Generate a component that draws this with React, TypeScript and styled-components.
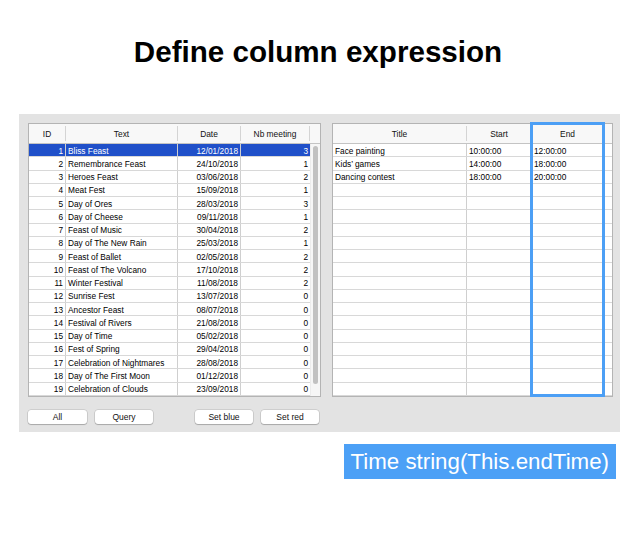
import React from "react";
import styled, { createGlobalStyle } from "styled-components";

const Global = createGlobalStyle`
  html, body { margin: 0; padding: 0; background: #ffffff; }
  body { font-family: "Liberation Sans", Arial, sans-serif; }
`;

const Page = styled.div`
  width: 640px;
  height: 560px;
  display: flex;
  flex-direction: column;
  box-sizing: border-box;
  padding-top: 35px;
  background: #fff;
`;

const Title = styled.h1`
  margin: 0 0 0 -4px;
  font-family: "Liberation Sans", Arial, sans-serif;
  font-weight: 700;
  font-size: 29.6px;
  line-height: 33px;
  text-align: center;
  color: #000;
`;

const Panel = styled.div`
  margin: 46px 0 0 19px;
  width: 601px;
  height: 318px;
  box-sizing: border-box;
  background: #e3e3e3;
  padding: 9px 7px 0 9px;
  display: flex;
  gap: 11px;
`;

const LeftSection = styled.div`
  display: flex;
  flex-direction: column;
  width: 293px;
`;

const Table = styled.div<{ $w: number }>`
  position: relative;
  width: ${(p) => p.$w}px;
  box-sizing: border-box;
  border: 1px solid #b4b4b4;
  background: #fff;
  font-size: 8.3px;
  color: #000;
`;

const RightTable = styled(Table)`
  height: 274px;
`;

const Header = styled.div<{ $cols: string }>`
  display: grid;
  grid-template-columns: ${(p) => p.$cols};
  height: 20px;
  box-sizing: border-box;
  background: #f8f8f8;
  border-bottom: 1px solid #c4c4c4;
`;

const HeadCell = styled.div<{ $last?: boolean }>`
  box-sizing: border-box;
  display: flex;
  align-items: center;
  justify-content: center;
  font-size: 8.4px;
  color: #111;
  border-right: ${(p) => (p.$last ? "none" : "1px solid #d4d4d4")};
  margin: 2px 0;
`;

const Body = styled.div`
  display: flex;
`;

const Rows = styled.div`
  display: flex;
  flex-direction: column;
  flex: 1;
`;

const Row = styled.div<{ $cols: string; $sel?: boolean }>`
  display: grid;
  grid-template-columns: ${(p) => p.$cols};
  height: 13.25px;
  box-sizing: border-box;
  border-bottom: 1px solid #d8d8d8;
  background: ${(p) => (p.$sel ? "#2050c9" : "#fff")};
  color: ${(p) => (p.$sel ? "#fff" : "#000")};
`;

const Cell = styled.div<{ $align?: "left" | "right"; $last?: boolean }>`
  box-sizing: border-box;
  padding: 1.5px 2px 0;
  line-height: 11px;
  white-space: nowrap;
  overflow: hidden;
  text-align: ${(p) => p.$align || "left"};
  border-right: ${(p) => (p.$last ? "none" : "1px solid #cfcfcf")};
`;

const ScrollTrack = styled.div`
  width: 10px;
  background: #f6f6f6;
  border-left: 1px solid #ececec;
  box-sizing: border-box;
  padding: 2px 0 0 2px;
`;

const Thumb = styled.div`
  width: 5px;
  height: 238px;
  border-radius: 3px;
  background: #c1c1c1;
`;

const ButtonBar = styled.div`
  display: flex;
  justify-content: space-between;
  margin-top: 13px;
  padding-right: 2px;
`;

const ButtonGroup = styled.div`
  display: flex;
  gap: 8px;
`;

const Button = styled.button<{ $w: number }>`
  width: ${(p) => p.$w}px;
  height: 14px;
  padding: 0;
  border: none;
  border-radius: 3px;
  background: #fff;
  box-shadow: 0 0 0 0.5px rgba(0, 0, 0, 0.18), 0 1px 1px rgba(0, 0, 0, 0.18);
  font-family: "Liberation Sans", Arial, sans-serif;
  font-size: 8.5px;
  color: #111;
`;

const ColumnHighlight = styled.div`
  position: absolute;
  left: 197px;
  top: -2px;
  width: 75px;
  height: 275px;
  box-sizing: border-box;
  border: 3.5px solid #4c9ff5;
  pointer-events: none;
`;

const Caption = styled.div`
  align-self: flex-end;
  margin: 12px 24px 0 0;
  height: 35px;
  box-sizing: border-box;
  padding: 0 7px 0 6px;
  background: #4ca0f6;
  color: #fff;
  font-family: "Liberation Sans", Arial, sans-serif;
  font-size: 22.3px;
  line-height: 35px;
  white-space: nowrap;
`;

type Feast = [number, string, string, number];

const feasts: Feast[] = [
  [1, "Bliss Feast", "12/01/2018", 3],
  [2, "Remembrance Feast", "24/10/2018", 1],
  [3, "Heroes Feast", "03/06/2018", 2],
  [4, "Meat Fest", "15/09/2018", 1],
  [5, "Day of Ores", "28/03/2018", 3],
  [6, "Day of Cheese", "09/11/2018", 1],
  [7, "Feast of Music", "30/04/2018", 2],
  [8, "Day of The New Rain", "25/03/2018", 1],
  [9, "Feast of Ballet", "02/05/2018", 2],
  [10, "Feast of The Volcano", "17/10/2018", 2],
  [11, "Winter Festival", "11/08/2018", 2],
  [12, "Sunrise Fest", "13/07/2018", 0],
  [13, "Ancestor Feast", "08/07/2018", 0],
  [14, "Festival of Rivers", "21/08/2018", 0],
  [15, "Day of Time", "05/02/2018", 0],
  [16, "Fest of Spring", "29/04/2018", 0],
  [17, "Celebration of Nightmares", "28/08/2018", 0],
  [18, "Day of The First Moon", "01/12/2018", 0],
  [19, "Celebration of Clouds", "23/09/2018", 0],
];

const activities: [string, string, string][] = [
  ["Face painting", "10:00:00", "12:00:00"],
  ["Kids\u2019 games", "14:00:00", "18:00:00"],
  ["Dancing contest", "18:00:00", "20:00:00"],
];

const leftCols = "37px 112px 63px 69px";
const leftHeadCols = "37px 112px 63px 69px 10px";
const rightCols = "134px 65px 72px 8px";

export default function App() {
  const rightRows = Array.from({ length: 19 }, (_, i) => activities[i] || ["", "", ""]);
  return (
    <Page>
      <Global />
      <Title>Define column expression</Title>
      <Panel>
        <LeftSection>
          <Table $w={293}>
            <Header $cols={leftHeadCols}>
              <HeadCell>ID</HeadCell>
              <HeadCell>Text</HeadCell>
              <HeadCell>Date</HeadCell>
              <HeadCell>Nb meeting</HeadCell>
              <HeadCell $last />
            </Header>
            <Body>
              <Rows>
                {feasts.map(([id, text, date, nb]) => (
                  <Row key={id} $cols={leftCols} $sel={id === 1}>
                    <Cell $align="right">{id}</Cell>
                    <Cell>{text}</Cell>
                    <Cell $align="right">{date}</Cell>
                    <Cell $align="right" $last>
                      {nb}
                    </Cell>
                  </Row>
                ))}
              </Rows>
              <ScrollTrack>
                <Thumb />
              </ScrollTrack>
            </Body>
          </Table>
          <ButtonBar>
            <ButtonGroup>
              <Button $w={59}>All</Button>
              <Button $w={58}>Query</Button>
            </ButtonGroup>
            <ButtonGroup>
              <Button $w={58}>Set blue</Button>
              <Button $w={58}>Set red</Button>
            </ButtonGroup>
          </ButtonBar>
        </LeftSection>
        <RightTable $w={281}>
          <Header $cols={rightCols}>
            <HeadCell>Title</HeadCell>
            <HeadCell>Start</HeadCell>
            <HeadCell>End</HeadCell>
            <HeadCell $last />
          </Header>
          <Rows>
            {rightRows.map(([t, s, e], i) => (
              <Row key={i} $cols={rightCols}>
                <Cell>{t}</Cell>
                <Cell>{s}</Cell>
                <Cell>{e}</Cell>
                <Cell $last />
              </Row>
            ))}
          </Rows>
          <ColumnHighlight />
        </RightTable>
      </Panel>
      <Caption>Time string(This.endTime)</Caption>
    </Page>
  );
}
